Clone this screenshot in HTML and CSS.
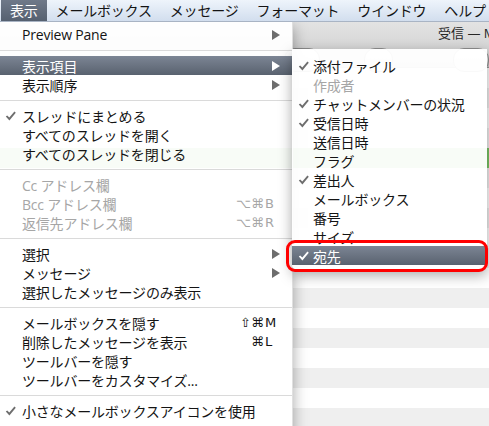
FILE: index.html
```html
<!DOCTYPE html>
<html lang="ja">
<head>
    <meta charset="UTF-8">
    <title>表示メニュー</title>
    <link rel="stylesheet" href="styles.css">
</head>
<body>
    <div class="menubar">
        <span class="mb-item active">表示</span>
        <span class="mb-item">メールボックス</span>
        <span class="mb-item">メッセージ</span>
        <span class="mb-item">フォーマット</span>
        <span class="mb-item">ウインドウ</span>
        <span class="mb-item">ヘルプ</span>
    </div>

    <div class="window">
        <div class="titlebar">受信 — Mail</div>
        <div class="toolbar">
            <span class="tb-btn b1"></span>
            <span class="tb-btn b2"></span>
            <span class="tb-btn b3"></span>
        </div>
        <div class="list">
            <div class="row"></div><div class="row"></div><div class="row"></div><div class="row"></div>
            <div class="row sel"></div><div class="row"></div><div class="row"></div><div class="row"></div>
            <div class="row"></div><div class="row"></div><div class="row"></div><div class="row"></div>
            <div class="row"></div><div class="row"></div><div class="row"></div><div class="row"></div>
            <div class="row"></div><div class="row"></div>
        </div>
    </div>

    <div class="menu main-menu">
        <div class="item"><span class="mark"></span><span class="label">Preview Pane</span><span class="arrow"></span></div>
        <div class="sep"></div>
        <div class="item hl"><span class="mark"></span><span class="label">表示項目</span><span class="arrow"></span></div>
        <div class="item"><span class="mark"></span><span class="label">表示順序</span><span class="arrow"></span></div>
        <div class="sep"></div>
        <div class="item"><span class="mark"><svg class="check" viewBox="0 0 11 10"><path d="M0.8 5.6 L2.2 4.4 L4.3 6.6 L9.4 0.6 L10.8 1.7 L4.4 9.4 Z"/></svg></span><span class="label">スレッドにまとめる</span></div>
        <div class="item"><span class="mark"></span><span class="label">すべてのスレッドを開く</span></div>
        <div class="item"><span class="mark"></span><span class="label">すべてのスレッドを閉じる</span></div>
        <div class="sep"></div>
        <div class="item off"><span class="mark"></span><span class="label">Cc アドレス欄</span></div>
        <div class="item off"><span class="mark"></span><span class="label">Bcc アドレス欄</span><span class="keys"><span class="mod">⌥⌘</span><span class="key">B</span></span></div>
        <div class="item off"><span class="mark"></span><span class="label">返信先アドレス欄</span><span class="keys"><span class="mod">⌥⌘</span><span class="key">R</span></span></div>
        <div class="sep"></div>
        <div class="item"><span class="mark"></span><span class="label">選択</span><span class="arrow"></span></div>
        <div class="item"><span class="mark"></span><span class="label">メッセージ</span><span class="arrow"></span></div>
        <div class="item"><span class="mark"></span><span class="label">選択したメッセージのみ表示</span></div>
        <div class="sep"></div>
        <div class="item"><span class="mark"></span><span class="label">メールボックスを隠す</span><span class="keys"><span class="mod">⇧⌘</span><span class="key">M</span></span></div>
        <div class="item"><span class="mark"></span><span class="label">削除したメッセージを表示</span><span class="keys"><span class="mod">⌘</span><span class="key">L</span></span></div>
        <div class="item"><span class="mark"></span><span class="label">ツールバーを隠す</span></div>
        <div class="item"><span class="mark"></span><span class="label">ツールバーをカスタマイズ...</span></div>
        <div class="sep"></div>
        <div class="item"><span class="mark"><svg class="check" viewBox="0 0 11 10"><path d="M0.8 5.6 L2.2 4.4 L4.3 6.6 L9.4 0.6 L10.8 1.7 L4.4 9.4 Z"/></svg></span><span class="label">小さなメールボックスアイコンを使用</span></div>
    </div>

    <div class="menu sub-menu">
        <div class="item"><span class="mark"><svg class="check" viewBox="0 0 11 10"><path d="M0.8 5.6 L2.2 4.4 L4.3 6.6 L9.4 0.6 L10.8 1.7 L4.4 9.4 Z"/></svg></span><span class="label">添付ファイル</span></div>
        <div class="item off"><span class="mark"></span><span class="label">作成者</span></div>
        <div class="item"><span class="mark"><svg class="check" viewBox="0 0 11 10"><path d="M0.8 5.6 L2.2 4.4 L4.3 6.6 L9.4 0.6 L10.8 1.7 L4.4 9.4 Z"/></svg></span><span class="label">チャットメンバーの状況</span></div>
        <div class="item"><span class="mark"><svg class="check" viewBox="0 0 11 10"><path d="M0.8 5.6 L2.2 4.4 L4.3 6.6 L9.4 0.6 L10.8 1.7 L4.4 9.4 Z"/></svg></span><span class="label">受信日時</span></div>
        <div class="item"><span class="mark"></span><span class="label">送信日時</span></div>
        <div class="item"><span class="mark"></span><span class="label">フラグ</span></div>
        <div class="item"><span class="mark"><svg class="check" viewBox="0 0 11 10"><path d="M0.8 5.6 L2.2 4.4 L4.3 6.6 L9.4 0.6 L10.8 1.7 L4.4 9.4 Z"/></svg></span><span class="label">差出人</span></div>
        <div class="item"><span class="mark"></span><span class="label">メールボックス</span></div>
        <div class="item"><span class="mark"></span><span class="label">番号</span></div>
        <div class="item"><span class="mark"></span><span class="label">サイズ</span></div>
        <div class="item hl"><span class="mark"><svg class="check" viewBox="0 0 11 10"><path d="M0.8 5.6 L2.2 4.4 L4.3 6.6 L9.4 0.6 L10.8 1.7 L4.4 9.4 Z"/></svg></span><span class="label">宛先</span></div>
    </div>

    <div class="callout"></div>
</body>
</html>
```

FILE: styles.css
```css
body {
    margin: 0;
    width: 489px;
    height: 426px;
    overflow: hidden;
    position: relative;
    background-color: #fff;
    font-family: "Open Sans", "Noto Sans CJK JP", "DejaVu Sans", sans-serif;
    font-size: 14px;
    color: #141414;
}

/* menu bar */
.menubar {
    display: flex;
    height: 21px;
    padding-left: 1px;
    border-bottom: 1px solid #a9b4c4;
    background: linear-gradient(#eef4fb, #d2deee);
    position: relative;
    z-index: 3;
}

.mb-item {
    padding: 0 9px;
    line-height: 21px;
    letter-spacing: -0.2px;
    white-space: nowrap;
}

.mb-item.active {
    background: linear-gradient(#6f7989, #556070);
    color: #fff;
}

/* mail window behind the menus */
.window {
    position: absolute;
    top: 22px;
    left: 0;
    right: 0;
    bottom: 0;
}

.titlebar {
    height: 22px;
    line-height: 22px;
    padding-left: 438px;
    font-size: 13px;
    color: #262626;
    white-space: nowrap;
    overflow: hidden;
    background: linear-gradient(#e3e3e3, #d8d8d8);
}

.toolbar {
    display: flex;
    align-items: flex-start;
    height: 24px;
    padding-top: 4px;
    box-sizing: border-box;
    background: linear-gradient(#d8d8d8, #c6c6c6);
    border-bottom: 1px solid #9a9a9a;
}

.tb-btn {
    height: 22px;
    border: 1px solid #8f8f8f;
    border-radius: 11px;
    background: linear-gradient(#fbfbfb, #dcdcdc);
}

.b1 { width: 40px; margin-left: 284px; }
.b2 { width: 32px; margin-left: 44px; }
.b3 { width: 40px; margin-left: 60px; }

.list .row {
    height: 20px;
}

.list .row:nth-child(even) {
    background-color: #efefef;
}

.list .row.sel {
    background-color: #79c566;
}

/* menus */
.menu {
    position: absolute;
    background-color: rgba(255, 255, 255, 0.95);
    box-shadow: 0 5px 14px rgba(0, 0, 0, 0.35);
    z-index: 2;
}

.main-menu {
    top: 22px;
    left: 0;
    width: 293px;
    height: 420px;
    padding-top: 3px;
    box-sizing: border-box;
    border-right: 1px solid rgba(0, 0, 0, 0.12);
}

.sub-menu {
    top: 49px;
    left: 292px;
    width: 195px;
    padding: 7px 0 5px;
    border-radius: 0 0 5px 5px;
}

.item {
    display: flex;
    align-items: center;
    height: 19px;
    padding-right: 12px;
    letter-spacing: -0.2px;
    white-space: nowrap;
}

.mark {
    width: 22px;
    padding-left: 5px;
    box-sizing: border-box;
    display: flex;
    align-items: center;
}

.sub-menu .mark {
    width: 21px;
    padding-left: 6px;
}

.check {
    width: 11px;
    height: 10px;
    fill: #6e6e6e;
}

.label {
    flex: 1;
}

.arrow {
    width: 0;
    height: 0;
    border-left: 8px solid #6d6d6d;
    border-top: 5px solid transparent;
    border-bottom: 5px solid transparent;
}

.keys {
    display: flex;
    font-family: "DejaVu Sans", sans-serif;
    font-size: 13px;
    letter-spacing: 0;
}

.key {
    width: 16px;
    padding-left: 1px;
    box-sizing: border-box;
}

.item.off {
    color: #a6a6a6;
}

.item.hl {
    background: linear-gradient(#7c8594, #59626f);
    color: #fff;
}

.item.hl .arrow {
    border-left-color: #fff;
}

.item.hl .check {
    fill: #fff;
}

.sep {
    height: 12px;
    display: flex;
    align-items: center;
}

.sep::after {
    content: "";
    flex: 1;
    border-top: 1px solid #dadada;
}

/* red annotation */
.callout {
    position: absolute;
    left: 286px;
    top: 240px;
    width: 202px;
    height: 32px;
    box-sizing: border-box;
    border: 3px solid #f00;
    border-radius: 9px;
    z-index: 4;
}
```
